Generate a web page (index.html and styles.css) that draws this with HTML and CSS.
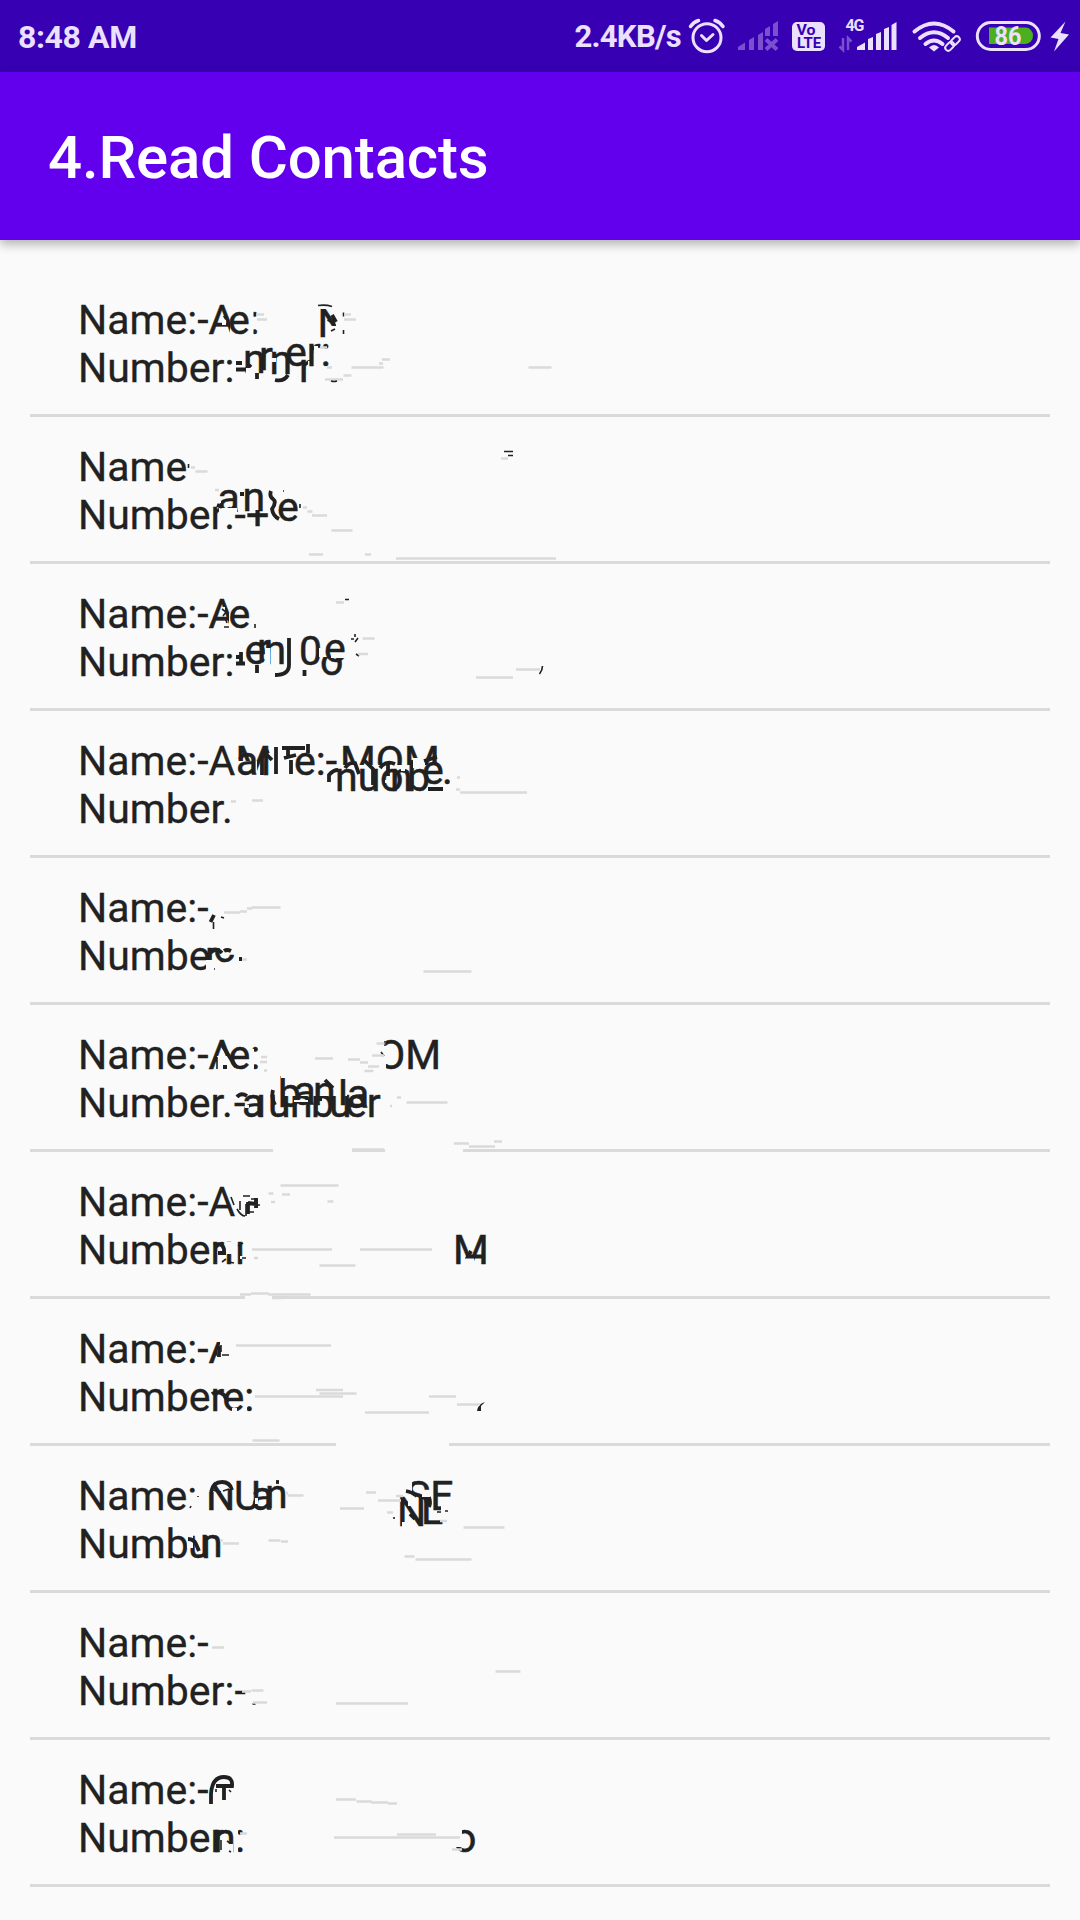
FILE: index.html
```html
<!DOCTYPE html>
<html lang="en">
<head>
<meta charset="utf-8">
<title>4.Read Contacts</title>
<link rel="stylesheet" href="styles.css">
</head>
<body>
<header class="status">
  <span class="clock">8:48 AM</span>
  <span class="speed">2.4KB/s</span>
  <svg class="icon" width="44" height="72" viewBox="686 0 44 72"><g class="line" stroke-width="3"><circle cx="707" cy="37.700" r="14"/><path d="M701.500 35.500l5 5 6.500-6"/><path d="M690.500 26.500q3-4.500 8-6M723 26.500q-3-4.500-8-6" stroke-width="3.500"/></g></svg>
  <svg class="icon" width="55" height="72" viewBox="730 0 55 72"><path class="dim" d="M738 50v-3l7-4.500v7.500zM749 50v-10l5-3v13zM758 50v-15l5-3v18zM765 36v-7l5-3v10zM773 36v-12l5-3v15z"/><path class="dimline" d="M766 39.500l11 10M777 39.500l-11 10"/></svg>
  <svg class="icon" width="47" height="72" viewBox="785 0 47 72"><rect class="fill" x="792" y="22" width="33" height="29" rx="5"/><text class="volte" x="796.500" y="35" textLength="19" lengthAdjust="spacingAndGlyphs">Vo</text><text class="volte" x="797" y="47.500" textLength="24" lengthAdjust="spacingAndGlyphs">LTE</text></svg>
  <svg class="icon" width="72" height="72" viewBox="832 0 72 72"><text class="gen" x="845.500" y="31" textLength="19">4G</text><path class="dimline thin" d="M843 38v12l-3.500-3.500M848 50v-12l3.500 3.500"/><path class="fill" d="M857 50v-3l8-4.500v7.500zM868 50v-11l5-2v13zM876 50v-16l5-2v18zM884 50v-21l5-2v23zM891.500 50v-25l5-3v28z"/></svg>
  <svg class="icon" width="64" height="72" viewBox="904 0 64 72"><path class="line" stroke-width="4" d="M914.500 31.500q19.500-16 39 0M920 38q14-11.500 28 0M925.500 44q8.500-7 17 0"/><path class="fill" d="M929 47.500q5-5 10 0l-5 4z"/><g class="line" stroke-width="2" transform="rotate(-45 952.500 43.500)"><rect x="943.500" y="40.500" width="10" height="6" rx="3"/><rect x="951.500" y="40.500" width="10" height="6" rx="3"/></g></svg>
  <svg class="icon" width="112" height="72" viewBox="968 0 112 72"><rect class="line" stroke-width="3" x="977.300" y="22.500" width="62" height="27" rx="13.500"/><path class="green" d="M989 27.500h36.500a7.500 8.200 0 0 1 0 16.500H989z"/><text class="pct" x="994.500" y="45" textLength="27" lengthAdjust="spacingAndGlyphs">86</text><path class="fill" d="M1065.500 21.500l-15 16 8 1.500-4.500 12.500 15-17-8.500-1.500z"/></svg>
</header>
<div class="appbar"><h1>4.Read Contacts</h1></div>
<ul class="list">
  <li class="row"><p>Name:-</p><p>Number:</p>
    <svg class="over" width="600" height="147" viewBox="30 270 600 147">
      <text x="208.500" y="334">A</text><path class="c" d="M230 313h9v22h-9zM222 320h4v5h-4z"/><path class="b" d="M224 318l3-2"/><text x="228" y="334">e</text><text x="249.500" y="334">:</text><path class="c" d="M249 308h4.500v27h-4.500z"/>
      <text x="317.500" y="337">N</text><path class="c" d="M336 305h10v35h-10zM327 326h12v14h-12zM318 307h8v2h-8z"/><path class="b" d="M328 319l7 4M332 315l4 7"/><path class="k" d="M318 305.500q8-1 14 1M343.500 312.500v4M343.500 330v4M331 331l4-2"/>
      <path class="b" d="M236 363h6M236 369.500h10l5-5M257 373v6M275 380q9 2 13-5"/>
      <text x="243" y="373">n</text><text x="259" y="370">r</text><text x="269.500" y="374">n</text><path class="c" d="M271 358h5v4h-5zM246 368h6v6h-6z"/><text x="299" y="382">r</text><path class="c" d="M308 361h12v8h-12z"/><text x="285" y="366">er:</text><path class="c" d="M314 346h4v4h-4z"/>
      <path class="g" d="M256 314.500h8M257 319.500h10M344 314.500h7M344 319.500h12M320 347.500h7M327 367.500h5M351.500 367.500h32M379 363.500h4M382 359.500h8M528.500 367.500h23M343.500 375.500h8M325 379.500h18"/><path class="k" d="M331 381q3 1 6 0"/>
    </svg></li>
  <li class="row"><p>Name</p><p>Number:-</p>
    <svg class="over" width="600" height="147" viewBox="30 417 600 147">
      <path class="c" d="M220 490h18v14h-18z"/><text x="246" y="529">+</text><path class="c" d="M247 500h21v10h-21z"/><text x="217.500" y="512">a</text><path class="c" d="M217 498h4v5h-4zM219 508h18v5h-18z"/><text x="242.500" y="511">n</text><text x="277" y="520.500">e</text>
      <path class="b" d="M240 494h4M271 491q-2 5 2 8t-1 10q1 7 7 10M217 505l5 2"/><path class="k" d="M188.500 464v4M504 451.500h9M508 455.500h5M300 504v4M283 491h1"/>
      <path class="g" d="M191 467.500h4M195.500 471.500h12M501 458.500h7M303 507.500h4M307.500 511.500h5M312 515.500h15M331.500 530.500h21M309 554.500h14M365 554.500h6M396 558.500h160M215 490h4"/>
    </svg></li>
  <li class="row"><p>Name:-</p><p>Number:</p>
    <svg class="over" width="600" height="147" viewBox="30 564 600 147">
      <text x="208.500" y="628">A</text><path class="c" d="M229 613h8v16h-8zM222 607h3v6h-3z"/><text x="228.500" y="628">e</text><path class="k" d="M222 609l4 3-3 4M220 619q5-4 7 4M224 627h5M255 624v4"/>
      <path class="b" d="M236 657h6M241 652v10M236 663.500h9M257 665v8M289 638v27q0 10-14 10M304.500 670v6"/>
      <text x="244.500" y="664">e</text><text x="257" y="662">r</text><text x="263.500" y="664">n</text><path class="c" d="M265 648h5v18h-5z"/><text x="299" y="665">0</text><text x="320" y="675">o</text><path class="c" d="M319 648h26v9h-26z"/><text x="324" y="662">e</text><path class="c" d="M331 655h16v3h-16z"/>
      <path class="k" stroke-width="3" d="M351 639h3M355 634v3M355 642l3-4M356 654l3 2M345 599.500h4M542.500 666q0 4-3 8"/>
      <path class="g" d="M336 602.500h8M362.500 638.500h12M358 654h10M476 677.500h37M516 669.500h24"/>
    </svg></li>
  <li class="row"><p>Name:-A</p><p>Number.</p>
    <svg class="over" width="600" height="147" viewBox="30 711 600 147">
      <text x="235.500" y="775">M</text><path class="c" d="M236 761h21v15h-21z"/><text x="236" y="775">a</text><path class="b" d="M262 775v-16q2-6 7-8M276 747v27M282 748h23M288 750v8M291 760v14M308 744v9M284 758l12-3M264 752l8 8"/><text x="294" y="775">e:-</text>
      <text x="340" y="775">MOM</text><path class="c" d="M341 765h100v12h-100z"/><text x="335" y="790.500">nu</text><text x="380" y="790.500">o</text><text x="390" y="790.500">n</text><text x="407" y="790.500">b</text><path class="c" d="M413 758h12v10h-12z"/><text x="422" y="784">e</text><text x="442" y="784">.</text><path class="b" d="M329 782v-7q4-5 9-5M428 789h15M388 764v12M424 761l13-4M345 768q4-6 10-5l4 11M364 760l9 9v16M380 768q6-8 15-4"/><path class="c" d="M385 780h5v3h-5zM350 766h4v2h-4zM401 768h4v3h-4zM433 776h8v2h-8z"/>
      <path class="g" d="M457 777.500h3M456 789.500h4M460 792.500h67M231 801.500h5M252 800.500h11"/>
    </svg></li>
  <li class="row"><p>Name:-</p><p>Numbe</p>
    <svg class="over" width="600" height="147" viewBox="30 858 600 147">
      <path class="b" d="M214 915l-3.500 7"/><path class="k" d="M213.500 922v7M221 917l3 1"/>
      <text x="205" y="970">r</text><path class="c" d="M206 960h9v11h-9z"/><text x="213.500" y="961.500">c</text><path class="c" d="M213 936h22v12h-22z"/><path class="b" d="M210 951q6-4 12 2M224 951q3-2 7 0M239 959h3"/><path class="k" d="M214 969h1"/>
      <path class="g" d="M224 912.500h16M240 911.500h7M247 908.500h5M251.500 907.500h29M242 959.500h5M423.500 971.500h48"/>
    </svg></li>
  <li class="row"><p>Name:-</p><p>Number.</p>
    <svg class="over" width="600" height="147" viewBox="30 1005 600 147">
      <text x="208.500" y="1069">A</text><path class="c" d="M217 1056h20v14h-20z"/><path class="b" d="M222 1045l14 22M223 1067h4"/><path class="k" d="M217 1057v12"/><text x="228.500" y="1069">e:</text><path class="c" d="M251 1049h3v21h-3z"/>
      <text x="377" y="1069">OM</text><path class="c" d="M376 1036h10v36h-10zM386 1048h5v16h-5z"/><path class="k" d="M385 1041v5M381 1052l3 4"/>
      <text x="234" y="1117">-</text><text x="242" y="1117">a</text><text x="256" y="1117">ı</text><text x="268" y="1117">u</text><text x="290" y="1117">n</text><text x="311" y="1117">b</text><text x="329" y="1117">u</text><text x="345" y="1117">er</text><path class="c" d="M280 1080h67v16h-67zM245 1105h4v3h-4z"/><text x="278" y="1107">b</text><text x="293.500" y="1105">a</text><text x="313" y="1105">n</text><text x="338" y="1105">l</text><text x="347" y="1108">a</text><path class="c" d="M281 1074h16v4h-16zM336 1074h12v5h-12zM294 1100h14v2h-14z"/><path class="b" d="M273 1090q-2 8 2 15M325 1080l8 8M314 1099h8M237 1097q4-5 10-1"/>
      <path class="c" d="M273 1148h79v4h-79zM385 1148h78v4h-78z"/>
      <path class="g" d="M376.500 1043.500h8M372 1055.500h12M348 1059.500h12M360 1062.500h8M368 1066.500h11M364.500 1071h9M315 1058.500h18M264 1070.500h3M397 1097.500h4M406.500 1102.500h41M454 1143.500h15M469 1146.500h26"/><path class="g" stroke-width="1.500" d="M261 1057h6M260 1062h7M494 1141.500h8M390 1106h2M352 1149.500h32"/>
    </svg></li>
  <li class="row"><p>Name:-A</p><p>Number</p>
    <svg class="over" width="600" height="150" viewBox="30 1152 600 150">
      <path class="k" d="M231 1197l3 8M237 1209q4 7 8 7M243 1196h7M240 1201v9M251 1199h6v9M246 1204v12M249 1212h5M257 1205h3"/><path class="b" d="M248 1202v12M248 1203l8 1M256 1198v10"/>
      <text x="224" y="1264">ı</text><text x="235" y="1264">ı</text><path class="c" d="M226 1242h6v12h-6zM240 1256h3v3h-3z"/><path class="b" d="M214 1245q8-3 10 4v6M218 1253h8"/><path class="k" d="M222 1262l4-3M229 1262l5 1M238 1246l5-3M242 1258h4"/>
      <text x="453" y="1264">M</text><path class="c" d="M463 1258h11v8h-11z"/><path class="b" d="M471 1251l-3 5.500h17"/>
      <path class="c" d="M245 1295h27v5h-27z"/>
      <path class="g" d="M280.500 1185.500h58M268.500 1193.500h5M327.500 1201.500h6M252 1249.500h80M360 1249.500h72M319.500 1265.500h36M240 1294.500h11M251 1293.500h18M268.500 1294.500h42"/><path class="g" stroke-width="1" d="M282 1194.500h8M271 1202h4M254 1258h4M272 1298h10"/>
    </svg></li>
  <li class="row"><p>Name:-</p><p>Number</p>
    <svg class="over" width="600" height="147" viewBox="30 1299 600 147">
      <text x="208.500" y="1363">A</text><path class="c" d="M217 1350h20v14h-20zM220 1330h17v34h-17zM216 1330h6v12h-6z"/><path class="b" d="M219 1346v11"/><path class="k" d="M221 1345v7M222 1355h7"/>
      <path class="b" d="M212 1394q6-4 12 1l4 7"/><text x="222.500" y="1411">e:</text><path class="c" d="M232 1408h5v4h-5zM244 1398h3v12h-3z"/><path class="fillk" d="M485 1402q-7 2-8 9h4v-5z"/>
      <path class="c" d="M336 1442h113v5h-113z"/>
      <path class="g" d="M236 1345.500h95M255 1396.500h88M316 1390h27M319.500 1393.500h37M429 1396.500h27M457 1404.500h23M365 1412.500h64M252.500 1440.500h27"/>
    </svg></li>
  <li class="row"><p>Name:</p><p>Numb</p>
    <svg class="over" width="600" height="147" viewBox="30 1446 600 147">
      <path class="c" d="M187 1501h10v10h-10z"/><path class="k" d="M198 1496v1M190 1508l1-2"/>
      <text x="206" y="1510">N</text><path class="c" d="M207 1480h7v12h-7zM226 1480h8v9h-8z"/><path class="b" d="M211 1492q2-10 11-10 8 0 10 8"/><path class="k" d="M212 1490l9 2M223 1491l6-2"/><text x="234" y="1510">U</text><text x="251" y="1510">a</text><path class="c" d="M255 1498h3v6h-3z"/><text x="265" y="1508">n</text><path class="c" d="M275 1504h5v7h-5z"/><path class="b" d="M276 1482h3"/>
      <text x="406" y="1510">SE</text><path class="c" d="M404 1480h8v12h-8zM406 1503h20v12h-20zM441 1503h16v12h-16z"/><path class="b" d="M406 1491q6 1 11 5M429 1497q2 6 0 10"/>
      <text x="397" y="1526">N</text><path class="c" d="M408 1500h7v6h-7zM402 1522h8v5h-8z"/><path class="b" d="M410 1514l5 5"/><text x="421" y="1524">L</text><path class="c" d="M422 1490h8v7h-8z"/><path class="k" d="M394 1517v2M437 1512h4M445 1511h3"/>
      <text x="188" y="1558">u</text><text x="200" y="1557">n</text><path class="c" d="M187 1534h6v14h-6z"/><path class="b" d="M188 1539q6 0 8 5l3 7"/>
      <path class="g" d="M285 1493h3M287.500 1495.500h16M340 1508.500h24M366 1492.500h10M378 1500.500h23M387 1512.500h6M440 1521h7M463.500 1527.500h41M404.500 1556.500h10M415.500 1559.500h56M268.500 1540.500h12M281 1541.500h7M223 1543.500h16M220 1540.500h3M396 1496h7"/>
    </svg></li>
  <li class="row"><p>Name:-</p><p>Number:-</p>
    <svg class="over" width="600" height="147" viewBox="30 1593 600 147">
      <path class="c" d="M243 1688h4v4h-4z"/><path class="k" stroke-width="3" d="M252.500 1704h3"/>
      <path class="g" d="M212 1647.500h12M495.500 1671.500h25M242 1691.500h9M251.500 1690.500h12M253 1702.500h14M336 1703.500h72"/>
    </svg></li>
  <li class="row"><p>Name:-</p><p>Number</p>
    <svg class="over" width="600" height="147" viewBox="30 1740 600 147">
      <path class="b" d="M211 1804v-10q1-17 13-17 9 0 8 9h-16M224 1788v12"/><path class="k" d="M216 1789v3M229 1790l2 2"/>
      <text x="213" y="1852">n</text><path class="c" d="M224 1844h9v9h-9z"/><text x="235" y="1852">:</text><path class="c" d="M234 1826h4v27h-4z"/><path class="k" d="M221 1840v10M227 1841l3 2M229 1851l2 1"/>
      <text x="453" y="1852">o</text><path class="c" d="M453 1828h9v19h-9z"/>
      <path class="g" d="M336 1799.500h20M356.500 1801.500h15M371 1802.500h17M388 1803.500h9M240 1833.500h7M334 1837.500h126M452 1849.500h10"/><path class="g" stroke-width="1.500" d="M397 1834.500h39"/>
    </svg></li>
</ul>
</body>
</html>
```
FILE: styles.css
```css
body { margin: 0; height: 1920px; overflow: hidden; background: #fafafa; font-family: Roboto, sans-serif; color: #212121; }
.status { display: flex; align-items: center; height: 72px; background: #3700b3; color: #ebe0ff; font-size: 32px; font-weight: 700; }
.clock { padding: 2px 0 0 18px; line-height: 70px; letter-spacing: -.4px; }
.speed { margin-left: auto; padding: 2px 5px 0 0; line-height: 70px; font-size: 31px; letter-spacing: -.7px; }
.icon { flex: none; display: block; }
.icon .line { fill: none; stroke: #ebe0ff; stroke-linecap: round; stroke-linejoin: round; }
.icon .fill { fill: #ebe0ff; }
.dim { fill: #7a50cf; }
.dimline { fill: none; stroke: #7a50cf; stroke-width: 4; }
.dimline.thin { stroke-width: 2.5; }
.volte { fill: #3700b3; font-size: 14.5px; font-weight: 700; }
.gen { fill: #ebe0ff; font-size: 16px; font-weight: 700; }
.green { fill: #4caf20; }
.pct { fill: #ebe0ff; font-size: 25px; font-weight: 700; }
.appbar { position: relative; display: flex; align-items: center; height: 168px; padding-left: 48px; background: #6200ee; box-shadow: 0 4px 10px rgba(0, 0, 0, .3); }
h1 { margin: 4px 0 0; color: #fff; font-size: 60px; line-height: 70px; font-weight: 500; letter-spacing: -.15px; }
.list { margin: 30px 30px 0; padding: 0; list-style: none; }
.row { position: relative; box-sizing: border-box; height: 147px; padding: 26px 48px 22px; border-bottom: 3px solid #dadada; }
.row p { margin: 0; font-size: 41px; line-height: 48px; white-space: pre; -webkit-text-stroke: .3px #212121; }
.over { position: absolute; left: 0; top: 0; overflow: visible; }
.over text { font-size: 41px; fill: #212121; stroke: #212121; stroke-width: .5px; }
.c { fill: #fafafa; }
.k { fill: none; stroke: #212121; stroke-width: 1.6; }
.b { fill: none; stroke: #212121; stroke-width: 3.8; }
.g { fill: none; stroke: #dadada; stroke-width: 2.6; }
.fillk { fill: #212121; }
```
